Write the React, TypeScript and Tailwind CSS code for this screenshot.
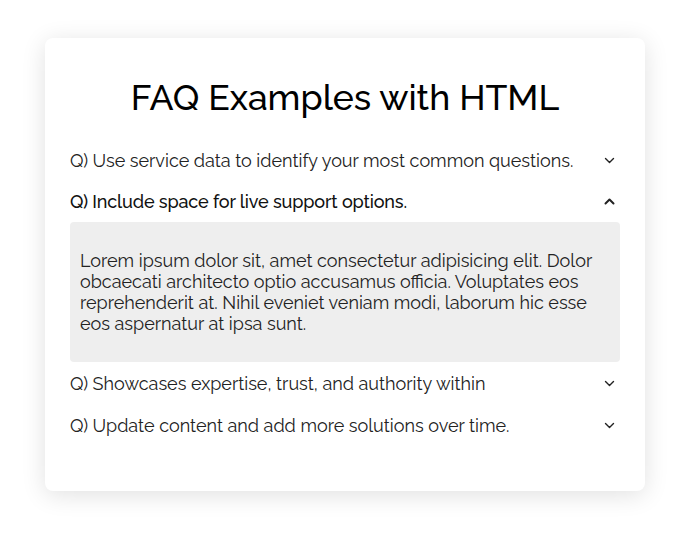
import React from "react";

const Chevron = ({ up = false, bold = false }: { up?: boolean; bold?: boolean }) => (
  <svg width="11" height="7" viewBox="0 0 11 7" className="shrink-0">
    <path
      d={up ? "M1.5 5.5 L5.5 1.5 L9.5 5.5" : "M1.5 1.5 L5.5 5.5 L9.5 1.5"}
      fill="none"
      stroke="#222"
      strokeWidth={bold ? 2 : 1.4}
      strokeLinecap="round"
      strokeLinejoin="round"
    />
  </svg>
);

const Row = ({ q, open = false, h = "h-[41px]" }: { q: string; open?: boolean; h?: string }) => (
  <div className={`flex items-center justify-between pr-[5px] ${h}`}>
    <span
      className={`text-[18px] ${open ? "font-medium tracking-[-0.15px] text-[#111]" : "font-normal text-[#222]"}`}
    >
      {q}
    </span>
    <Chevron up={open} bold={open} />
  </div>
);

export default function App() {
  return (
    <div
      className="min-h-[539px] bg-white pt-[38px] pl-[45px]"
      style={{ fontFamily: "Raleway, Lato, 'Open Sans', sans-serif" }}
    >
      <div className="w-[600px] rounded-[8px] bg-white px-[25px] pt-[38px] pb-[45px] shadow-[0_4px_24px_rgba(0,0,0,0.12)]">
        <h1 className="h-[44px] text-center text-[35.6px] leading-[44px] font-medium text-black">
          FAQ Examples with HTML
        </h1>
        <div className="mt-[20px]">
          <Row q="Q) Use service data to identify your most common questions." />
          <Row q="Q) Include space for live support options." open />
          <div className="rounded-[4px] bg-[#eeeeee] px-[10px] pt-[28px] pb-[28px]">
            <p className="text-[18px] leading-[21px] text-[#222]">
              Lorem ipsum dolor sit, amet consectetur adipisicing elit. Dolor obcaecati architecto optio
              accusamus officia. Voluptates eos reprehenderit at. Nihil eveniet veniam modi, laborum hic esse
              eos aspernatur at ipsa sunt.
            </p>
          </div>
          <Row q="Q) Showcases expertise, trust, and authority within" h="h-[42px]" />
          <Row q="Q) Update content and add more solutions over time." h="h-[42px]" />
        </div>
      </div>
    </div>
  );
}
